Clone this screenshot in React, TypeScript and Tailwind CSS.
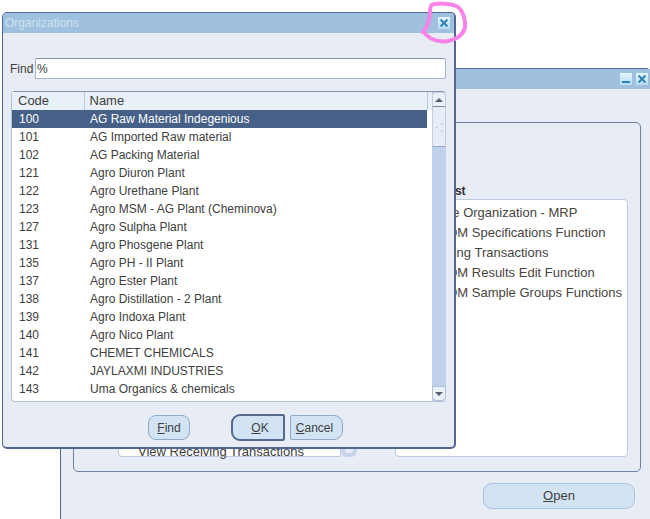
import React from "react";

const organizations: [string, string][] = [
  ["100", "AG Raw Material Indegenious"],
  ["101", "AG Imported Raw material"],
  ["102", "AG Packing Material"],
  ["121", "Agro Diuron Plant"],
  ["122", "Agro Urethane Plant"],
  ["123", "Agro MSM - AG Plant (Cheminova)"],
  ["127", "Agro Sulpha Plant"],
  ["131", "Agro Phosgene Plant"],
  ["135", "Agro PH - II Plant"],
  ["137", "Agro Ester Plant"],
  ["138", "Agro Distillation - 2 Plant"],
  ["139", "Agro Indoxa Plant"],
  ["140", "Agro Nico Plant"],
  ["141", "CHEMET CHEMICALS"],
  ["142", "JAYLAXMI INDUSTRIES"],
  ["143", "Uma Organics & chemicals"],
];

const topTen = [
  "Change Organization - MRP",
  "OPM QM Specifications Function",
  "Receiving Transactions",
  "OPM QM Results Edit Function",
  "OPM QM Sample Groups Functions",
];

function CloseIcon() {
  return (
    <svg viewBox="0 0 12 12" className="size-3" aria-hidden="true">
      <path d="M3 3 L9 9 M9 3 L3 9" stroke="#2f7fb0" strokeWidth="2" fill="none" />
      <path d="M2 3h2M8 3h2M2 9h2M8 9h2" stroke="#2f7fb0" strokeWidth="1" />
    </svg>
  );
}

function TitleButton({ label, children }: { label: string; children: React.ReactNode }) {
  return (
    <button
      aria-label={label}
      className="flex size-3 items-center justify-center bg-gradient-to-b from-[#e4f4fc] to-[#b4dcf4]"
    >
      {children}
    </button>
  );
}

function ScrollBar() {
  return (
    <div className="flex w-[14px] shrink-0 flex-col overflow-hidden rounded-r-[4px] bg-[#c0d2ea]">
      <button
        aria-label="Scroll up"
        className="flex h-[15px] items-center justify-center rounded-t-[4px] border border-[#c3cede] border-b-[#7d8aa5] bg-[#eaf1f9]"
      >
        <svg viewBox="0 0 8 4" className="h-1 w-2" aria-hidden="true">
          <path d="M4 0L8 4H0z" fill="#555e70" />
        </svg>
      </button>
      <div className="flex h-[40px] items-center justify-center border-x border-b border-[#c3cede] border-b-[#9aaac4] bg-[#e9eef6]">
        <svg viewBox="0 0 10 12" className="h-3 w-[10px]" aria-hidden="true">
          <g fill="#b7c2d4">
            <circle cx="7.5" cy="2.5" r="1.2" />
            <circle cx="2.5" cy="6" r="1.2" />
            <circle cx="7.5" cy="10" r="1.2" />
          </g>
          <g fill="#ffffff">
            <circle cx="7" cy="2" r=".8" />
            <circle cx="2" cy="5.5" r=".8" />
            <circle cx="7" cy="9.5" r=".8" />
          </g>
        </svg>
      </div>
      <div className="grow" />
      <button
        aria-label="Scroll down"
        className="flex h-[15px] items-center justify-center rounded-b-[5px] border border-[#b3c1d8] bg-[#eaf1f9]"
      >
        <svg viewBox="0 0 8 4" className="h-1 w-2" aria-hidden="true">
          <path d="M0 0H8L4 4z" fill="#555e70" />
        </svg>
      </button>
    </div>
  );
}

function NavigatorWindow() {
  return (
    <section
      aria-label="Navigator"
      className="absolute top-[68px] right-0 bottom-0 left-[60px] flex flex-col rounded-t-[4px] border-t border-l border-[#506a90] bg-[#e8edf5]"
    >
      <header className="flex h-5 shrink-0 items-center justify-end gap-1 bg-[#9fc0de] pr-[2px]">
        <TitleButton label="Minimize">
          <svg viewBox="0 0 12 12" className="size-3" aria-hidden="true">
            <path d="M2 9h8" stroke="#2f7fb0" strokeWidth="2" />
          </svg>
        </TitleButton>
        <TitleButton label="Close navigator">
          <CloseIcon />
        </TitleButton>
      </header>
      <div className="mt-[33px] mr-[9px] ml-3 flex grow gap-[38px] rounded-[5px] border border-[#6f82a3] px-3 pt-[61px] pb-[14px]">
        <div className="ml-8 flex w-[239px] shrink-0 pt-[15px]">
          <ul className="flex grow flex-col justify-end rounded-bl-[4px] border border-[#bdcbdf] bg-white pl-[19px] text-[13px] leading-2 whitespace-nowrap text-[#404040]">
            <li>View Receiving Transactions</li>
          </ul>
          <div className="w-4 rounded-b-[6px] border-x-4 border-b-4 border-[#c5d4e9] bg-[#e6eef8]" />
        </div>
        <div className="flex min-w-0 grow flex-col">
          <h2 className="h-[15px] pl-px text-[12px] leading-[15px] font-bold text-[#303030]">Top Ten List</h2>
          <ul className="grow rounded-[4px] border border-[#bdcbdf] bg-white pt-[3px] pl-[18px] text-[13px] leading-5 whitespace-nowrap text-[#484440]">
            {topTen.map((item) => (
              <li key={item}>{item}</li>
            ))}
          </ul>
        </div>
      </div>
      <footer className="flex shrink-0 justify-end pt-[11px] pr-[15px] pb-[10px]">
        <button className="h-[26px] w-[152px] rounded-[9px] border border-[#abc2dc] bg-[#d2e3f4] text-[13px] text-[#404040]">
          <span className="underline">O</span>pen
        </button>
      </footer>
    </section>
  );
}

function OrganizationsDialog() {
  return (
    <section
      role="dialog"
      aria-label="Organizations"
      className="absolute top-3 left-[2px] flex w-[454px] flex-col overflow-hidden rounded-[5px] border border-r-2 border-b-2 border-[#52668e] bg-[#e8edf5] text-[12px] text-[#404040]"
    >
      <header className="flex h-5 items-center justify-between bg-[#9fc0de] pr-1 pl-[2px]">
        <h1 className="text-[12px] text-[#cfe2f2]">Organizations</h1>
        <TitleButton label="Close">
          <CloseIcon />
        </TitleButton>
      </header>
      <div className="mt-[25px] mr-2 ml-[7px] flex h-[21px] items-center">
        <label htmlFor="find" className="w-[25px]">
          Find
        </label>
        <input
          id="find"
          defaultValue="%"
          className="h-full min-w-0 grow rounded-r-[3px] border border-[#a9b7ca] border-t-[#8995a8] bg-white px-px text-[12px]"
        />
      </div>
      <div className="mt-3 mr-2 ml-2 flex rounded-[4px] border border-r-0 border-[#b1bfd3] border-t-[#8995a8] bg-white">
        <div className="grow pb-[3px]">
          <table className="w-full border-collapse text-left">
            <thead>
              <tr className="h-[18px] bg-[#e8f0f8] text-[13px] leading-4">
                <th className="w-[72px] border-r border-[#bccbdc] p-0 pl-[6px] font-normal">Code</th>
                <th className="p-0 pl-[5px] font-normal">Name</th>
                <th className="w-[5px] border-l border-[#bccbdc] p-0" aria-label="Spacer" />
              </tr>
            </thead>
            <tbody>
              {organizations.map(([code, name], i) => (
                <tr key={code} className={i === 0 ? "h-[18px] text-white" : "h-[18px]"}>
                  <td className={i === 0 ? "bg-[#466087] p-0 pl-[7px]" : "p-0 pl-[7px]"}>{code}</td>
                  <td className={i === 0 ? "bg-[#466087] p-0 pl-[6px]" : "p-0 pl-[6px]"}>{name}</td>
                  <td className="p-0" />
                </tr>
              ))}
            </tbody>
          </table>
        </div>
        <ScrollBar />
      </div>
      <footer className="flex items-center pt-[12px] pb-[6px] pl-[145px]">
        <button className="h-[25px] w-[42px] rounded-[8px] border border-[#8faac8] bg-[#d2e3f4]">
          <span className="underline">F</span>ind
        </button>
        <button className="ml-[41px] h-[27px] w-[54px] rounded-l-[9px] rounded-r-[2px] border-2 border-[#55698e] bg-[#d2e3f4] pl-1">
          <span className="underline">O</span>K
        </button>
        <button className="ml-[5px] h-[25px] w-[53px] rounded-l-[2px] rounded-r-[9px] border border-[#8faac8] bg-[#d2e3f4] pr-1">
          <span className="underline">C</span>ancel
        </button>
      </footer>
    </section>
  );
}

export default function App() {
  return (
    <main className="relative min-h-screen overflow-hidden bg-white font-['Liberation_Sans',Arial,sans-serif]">
      <NavigatorWindow />
      <OrganizationsDialog />
      <svg viewBox="0 0 50 44" className="absolute top-0 left-[420px] h-11 w-[50px]" aria-hidden="true">
        <path
          d="M3 32 C8 27 9 20 10 12 C10 6 11 4 15 4 C22 3 33 4 38 7 C43 11 46 21 45 28 C42 37 32 42 22 41.5 C13 41 7 37 3 31"
          fill="none"
          stroke="#fa82e8"
          strokeWidth="4"
          strokeLinecap="round"
          strokeLinejoin="round"
        />
      </svg>
    </main>
  );
}
